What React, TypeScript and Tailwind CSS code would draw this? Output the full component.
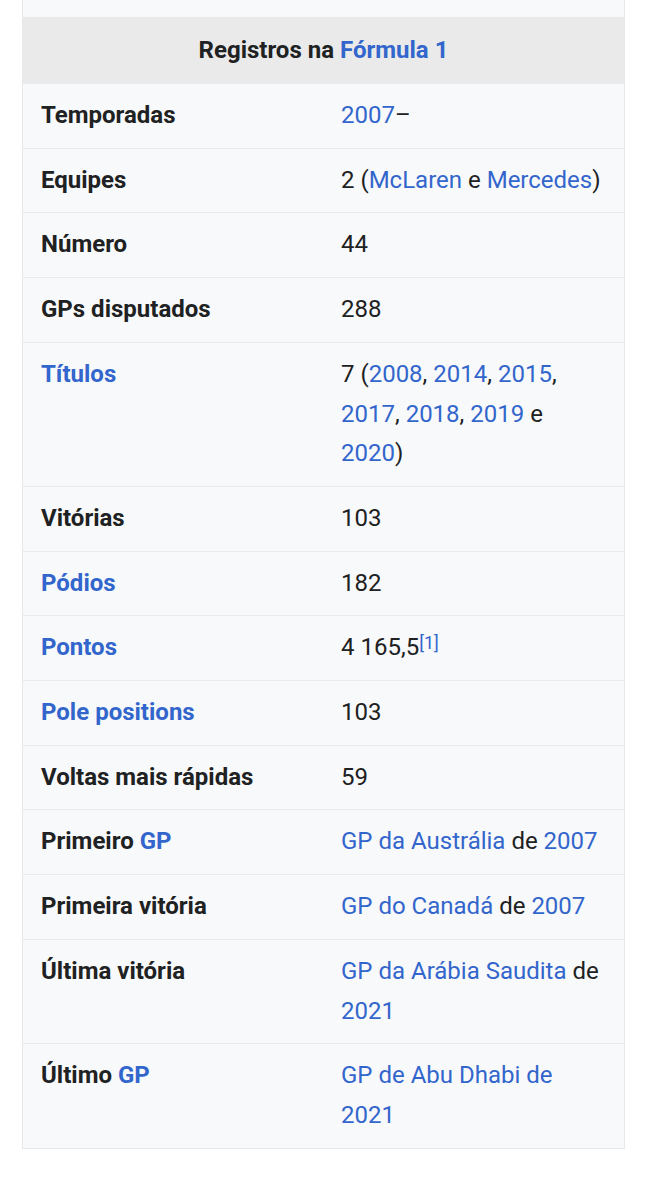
import React from 'react';

const L = ({ children }: { children: React.ReactNode }) => (
  <span className="text-[#3366cc]">{children}</span>
);

type Row = { label: React.ReactNode; value: React.ReactNode };

const rows: Row[] = [
  { label: 'Temporadas', value: <><L>2007</L>–</> },
  { label: 'Equipes', value: <>2 (<L>McLaren</L> e <L>Mercedes</L>)</> },
  { label: 'Número', value: '44' },
  { label: 'GPs disputados', value: '288' },
  {
    label: <L>Títulos</L>,
    value: (
      <>
        7 (<L>2008</L>, <L>2014</L>, <L>2015</L>, <L>2017</L>, <L>2018</L>, <L>2019</L> e <L>2020</L>)
      </>
    ),
  },
  { label: 'Vitórias', value: '103' },
  { label: <L>Pódios</L>, value: '182' },
  {
    label: <L>Pontos</L>,
    value: (
      <>
        4 165,5
        <sup className="relative -top-[6px] text-[18px] text-[#3366cc]">[1]</sup>
      </>
    ),
  },
  { label: <L>Pole positions</L>, value: '103' },
  { label: 'Voltas mais rápidas', value: '59' },
  { label: <>Primeiro <L>GP</L></>, value: <><L>GP da Austrália</L> de <L>2007</L></> },
  { label: 'Primeira vitória', value: <><L>GP do Canadá</L> de <L>2007</L></> },
  { label: 'Última vitória', value: <><L>GP da Arábia Saudita</L> de <L>2021</L></> },
  { label: <>Último <L>GP</L></>, value: <L>GP de Abu Dhabi de 2021</L> },
];

export default function App() {
  return (
    <div className="min-h-[1200px] bg-white font-['Roboto',sans-serif] text-[24px] text-[#202122]">
      <div className="ml-[22px] w-[603px] border-x border-b border-[#e6e8eb] bg-[#f8f9fa]">
        <div className="h-[17px]" />
        <div className="flex h-[66px] items-center justify-center bg-[#eaeaea] font-bold">
          Registros na&nbsp;<L>Fórmula 1</L>
        </div>
        {rows.map((r, i) => (
          <div key={i} className="flex border-t border-[#e8eaed] py-[12px] leading-[39.7px]">
            <div className="w-[318px] shrink-0 pl-[18px] font-bold">{r.label}</div>
            <div className="flex-1 pr-[18px]">{r.value}</div>
          </div>
        ))}
      </div>
    </div>
  );
}
